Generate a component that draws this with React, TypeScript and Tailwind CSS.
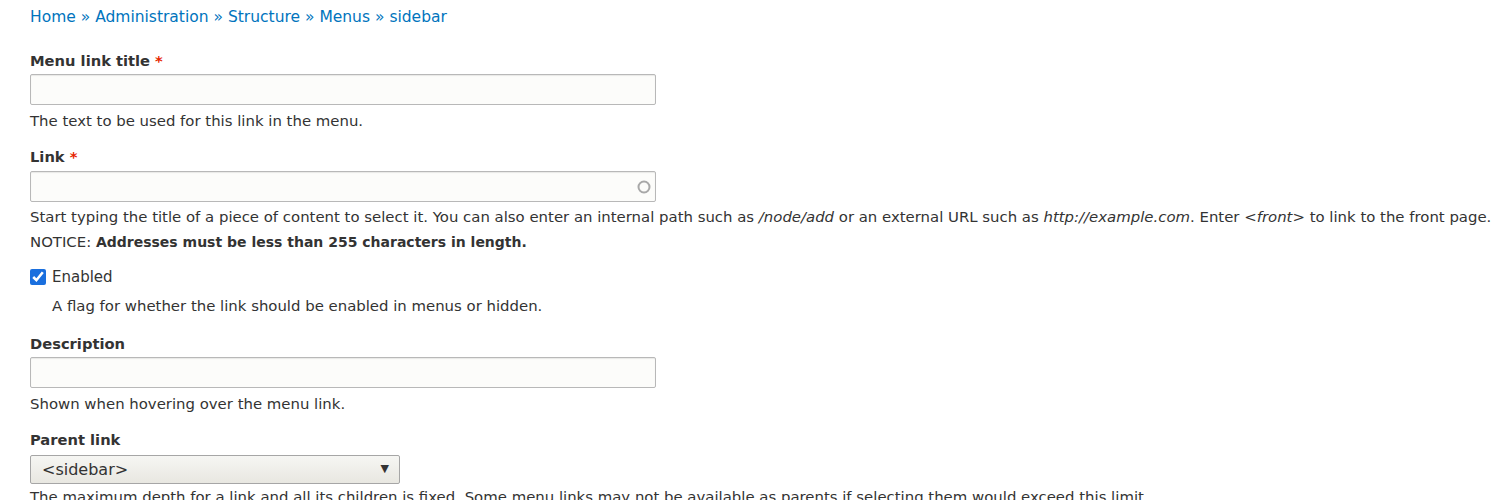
import React from 'react';

const font = { fontFamily: '"DejaVu Sans", "Noto Sans", sans-serif' };

const Label = ({ text, required }: { text: string; required?: boolean }) => (
  <div className="text-[14.7px] leading-5 font-bold text-[#333]">
    {text}
    {required && <span className="ml-[5px] text-[#e62600]">*</span>}
  </div>
);

const Help = ({ children, className = '' }: { children: React.ReactNode; className?: string }) => (
  <div className={`text-[14.9px] leading-5 text-[#333] ${className}`}>{children}</div>
);

const TextBox = ({ autocomplete }: { autocomplete?: boolean }) => (
  <div className="relative w-[626px] h-[31px] rounded-[2px] border border-[#b8b8b8] bg-[#fcfcfa] shadow-[inset_0_1px_1px_rgba(0,0,0,0.08)]">
    {autocomplete && (
      <svg className="absolute right-[4px] top-[8px]" width="14" height="14" viewBox="0 0 14 14">
        <circle cx="7" cy="7" r="5.5" fill="none" stroke="#a8a8a8" strokeWidth="2" />
      </svg>
    )}
  </div>
);

const App = () => {
  return (
    <div className="bg-white h-[500px] overflow-hidden px-[30px] pt-[7px]" style={font}>
      <div className="text-[15.5px] leading-5 text-[#0074bd]">
        <a>Home</a> <span>»</span> <a>Administration</a> <span>»</span> <a>Structure</a>{' '}
        <span>»</span> <a>Menus</a> <span>»</span> <a>sidebar</a>
      </div>

      <div className="mt-6">
        <Label text="Menu link title" required />
        <div className="mt-[3px]">
          <TextBox />
        </div>
        <Help className="mt-[6px]">The text to be used for this link in the menu.</Help>
      </div>

      <div className="mt-4">
        <Label text="Link" required />
        <div className="mt-1">
          <TextBox autocomplete />
        </div>
        <Help className="mt-[5px] whitespace-nowrap">
          Start typing the title of a piece of content to select it. You can also enter an internal path
          such as <em>/node/add</em> or an external URL such as <em>http://example.com</em>. Enter{' '}
          <em>&lt;front&gt;</em> to link to the front page.
        </Help>
        <Help className="mt-[5px]">
          NOTICE: <strong className="text-[14px]">Addresses must be less than 255 characters in length.</strong>
        </Help>
      </div>

      <div className="mt-[15px]">
        <label className="flex items-center gap-[6px] text-[15px] leading-5 text-[#333]">
          <input type="checkbox" defaultChecked className="w-4 h-4 m-0 accent-[#1a6fde]" />
          Enabled
        </label>
        <Help className="mt-[9px] pl-[22px]">A flag for whether the link should be enabled in menus or hidden.</Help>
      </div>

      <div className="mt-[18px]">
        <Label text="Description" />
        <div className="mt-[3px]">
          <TextBox />
        </div>
        <Help className="mt-[6px]">Shown when hovering over the menu link.</Help>
      </div>

      <div className="mt-4">
        <Label text="Parent link" />
        <div className="mt-[5px] w-[370px] h-[29px] rounded-[2px] border border-[#a6a6a6] bg-gradient-to-b from-[#f6f6f3] to-[#e8e7e1] flex items-center justify-between pl-[11px] pr-[10px] text-[16px] text-[#333]">
          <span>&lt;sidebar&gt;</span>
          <span className="text-[11px] text-[#333]">▼</span>
        </div>
        <Help className="mt-[3px]">
          The maximum depth for a link and all its children is fixed. Some menu links may not be available as
          parents if selecting them would exceed this limit.
        </Help>
      </div>
    </div>
  );
};

export default App;
